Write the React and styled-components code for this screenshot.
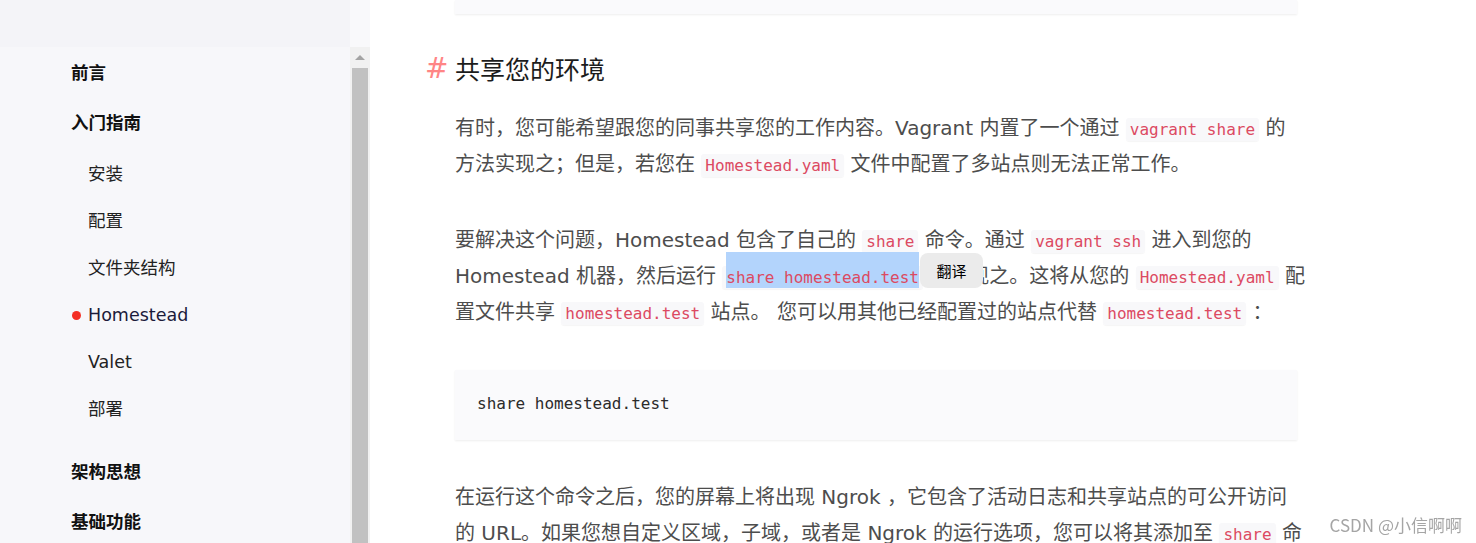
import React from "react";
import styled, { createGlobalStyle } from "styled-components";

const GlobalStyle = createGlobalStyle`
  html, body {
    margin: 0;
    padding: 0;
    background: #fff;
    overflow: hidden;
  }
  body {
    font-family: "DejaVu Sans", "Noto Sans CJK SC", sans-serif;
  }
`;

const Page = styled.div`
  display: flex;
  width: 100vw;
  height: 100vh;
  overflow: hidden;
`;

// ---- sidebar ----
const Sidebar = styled.aside`
  width: 370px;
  flex-shrink: 0;
  display: flex;
  flex-direction: column;
  background: #f6f6f9;
`;

const SidebarTop = styled.div`
  height: 47px;
  flex-shrink: 0;
  background: linear-gradient(to right, #f4f4f8 350px, #f9f9fb 350px);
`;

const ScrollArea = styled.div`
  flex: 1;
  display: flex;
  min-height: 0;
  background: #f7f7fa;
`;

const Nav = styled.nav`
  flex: 1;
  padding: 1px 0 0 71px;
`;

const GroupTitle = styled.div`
  height: 50px;
  line-height: 50px;
  font-size: 17.5px;
  font-weight: 700;
  color: #111;
`;

const SubList = styled.ul`
  list-style: none;
  margin: 3px 0 14px;
  padding: 0;
`;

const SubItem = styled.li`
  position: relative;
  height: 47px;
  line-height: 47px;
  padding-left: 17px;
  font-size: 17.5px;
  color: ${(p) => (p.active ? "#1b1b3a" : "#222")};

  &::before {
    content: "";
    display: ${(p) => (p.active ? "block" : "none")};
    position: absolute;
    left: 1px;
    top: 19px;
    width: 9px;
    height: 9px;
    border-radius: 50%;
    background: #f42f25;
  }
`;

const Scrollbar = styled.div`
  width: 20px;
  display: flex;
  flex-direction: column;
  background: #f1f1f1;
`;

const ScrollArrow = styled.div`
  height: 21px;
  display: flex;
  align-items: center;
  justify-content: center;

  &::after {
    content: "";
    border-left: 5px solid transparent;
    border-right: 5px solid transparent;
    border-bottom: 5px solid #a3a3a3;
  }
`;

const ScrollThumb = styled.div`
  flex: 1;
  margin: 0 2px;
  background: #c1c1c1;
`;

// ---- main content ----
const Main = styled.main`
  flex: 1;
  padding-left: 85px;
  overflow: hidden;
`;

const Content = styled.div`
  width: 842px;
`;

const TopBlock = styled.div`
  height: 14px;
  background: #fafafc;
  box-shadow: 0 1px 2px rgba(0, 0, 0, 0.07);
`;

const Heading = styled.h2`
  display: flex;
  align-items: center;
  margin: 36px 0 24px -30px;
  height: 36px;
  font-size: 25px;
  font-weight: 400;
  color: #1c1c1c;
  font-family: "Noto Sans CJK SC", sans-serif;
`;

const Anchor = styled.span`
  width: 30px;
  font-family: "DejaVu Sans", sans-serif;
  font-size: 28px;
  color: #ff8585;
`;

const Paragraph = styled.p`
  margin: 0 0 40px;
  font-size: 20px;
  line-height: 36px;
  color: #4d4d4d;
`;

const Line = styled.span`
  display: block;
  height: 36px;
  white-space: nowrap;
`;

const Code = styled.code`
  font-family: "DejaVu Sans Mono", monospace;
  font-size: 16px;
  line-height: 1;
  color: #dc4a62;
  background: #f8f8fa;
  padding: 2px 4px;
  border-radius: 3px;
  box-shadow: 0 1px 1px rgba(0, 0, 0, 0.04);
`;

const Selected = styled.span`
  position: relative;
  padding: 16px 0 1px;
  background: #b3d4fc;
`;

const Tooltip = styled.span`
  position: absolute;
  left: calc(100% + 1px);
  top: 1px;
  width: 63px;
  height: 35px;
  display: flex;
  align-items: center;
  justify-content: center;
  border-radius: 8px;
  background: #ebebeb;
  color: #000;
  font-family: "Noto Sans CJK SC", sans-serif;
  font-size: 15px;
`;

const CodeBlock = styled.pre`
  margin: 0 0 39px;
  padding: 23px 22px 25px;
  background: #fafafc;
  box-shadow: 0 1px 2px rgba(0, 0, 0, 0.07);
  font-family: "DejaVu Sans Mono", monospace;
  font-size: 16px;
  line-height: 22px;
  color: #2b2b2b;
`;

const Watermark = styled.div`
  position: fixed;
  right: 14px;
  bottom: 6px;
  font-family: "Noto Sans CJK SC", sans-serif;
  font-size: 17px;
  color: #a5a5a5;
  text-shadow: 0 0 2px #fff;
`;

const subItems = ["安装", "配置", "文件夹结构", "Homestead", "Valet", "部署"];

export default function App() {
  return (
    <Page>
      <GlobalStyle />
      <Sidebar>
        <SidebarTop />
        <ScrollArea>
          <Nav>
            <GroupTitle>前言</GroupTitle>
            <GroupTitle>入门指南</GroupTitle>
            <SubList>
              {subItems.map((item) => (
                <SubItem key={item} active={item === "Homestead"}>
                  {item}
                </SubItem>
              ))}
            </SubList>
            <GroupTitle>架构思想</GroupTitle>
            <GroupTitle>基础功能</GroupTitle>
          </Nav>
          <Scrollbar>
            <ScrollArrow />
            <ScrollThumb />
          </Scrollbar>
        </ScrollArea>
      </Sidebar>

      <Main>
        <Content>
          <TopBlock />
          <Heading>
            <Anchor>#</Anchor>
            共享您的环境
          </Heading>

          <Paragraph>
            <Line>
              有时，您可能希望跟您的同事共享您的工作内容。Vagrant 内置了一个通过 <Code>vagrant share</Code> 的
            </Line>
            <Line>
              方法实现之；但是，若您在 <Code>Homestead.yaml</Code> 文件中配置了多站点则无法正常工作。
            </Line>
          </Paragraph>

          <Paragraph>
            <Line>
              要解决这个问题，Homestead 包含了自己的 <Code>share</Code> 命令。通过 <Code>vagrant ssh</Code> 进入到您的
            </Line>
            <Line>
              Homestead 机器，然后运行{" "}
              <Code>
                <Selected>
                  share homestead.test
                  <Tooltip>翻译</Tooltip>
                </Selected>
              </Code>{" "}
              来实现之。这将从您的 <Code>Homestead.yaml</Code> 配
            </Line>
            <Line>
              置文件共享 <Code>homestead.test</Code> 站点。 您可以用其他已经配置过的站点代替 <Code>homestead.test</Code> ：
            </Line>
          </Paragraph>

          <CodeBlock>share homestead.test</CodeBlock>

          <Paragraph>
            <Line>在运行这个命令之后，您的屏幕上将出现 Ngrok ，它包含了活动日志和共享站点的可公开访问</Line>
            <Line>
              的 URL。如果您想自定义区域，子域，或者是 Ngrok 的运行选项，您可以将其添加至 <Code>share</Code> 命
            </Line>
          </Paragraph>
        </Content>
      </Main>

      <Watermark>CSDN @小信啊啊</Watermark>
    </Page>
  );
}
